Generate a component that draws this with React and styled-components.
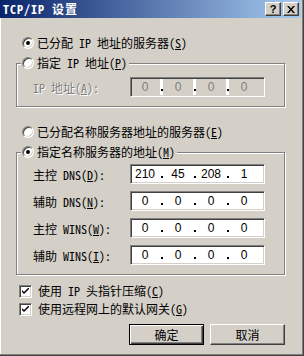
import React from "react";
import styled, { createGlobalStyle } from "styled-components";

const GlobalStyle = createGlobalStyle`
  html, body { margin: 0; padding: 0; background: #d4d0c8; }
  body {
    font-family: "Noto Sans Mono CJK SC", "Noto Sans CJK SC", sans-serif;
    font-size: 12px;
    color: #000;
  }
`;

const Window = styled.div`
  width: 304px;
  height: 356px;
  box-sizing: border-box;
  background: #d4d0c8;
  border-right: 1px solid #404040;
  border-bottom: 1px solid #404040;
  box-shadow: inset -1px -1px #808080, inset 1px 0 #fff;
  padding: 0 2px 2px 0;
  display: flex;
  flex-direction: column;
`;

const TitleBar = styled.div`
  height: 18px;
  display: flex;
  align-items: center;
  padding: 0 2px 0 3px;
  background: linear-gradient(to right, #0a246a, #a6caf0);
`;

const Title = styled.div`
  flex: 1;
  color: #fff;
  font-weight: bold;
  line-height: 18px;
  letter-spacing: 1px;
`;

const CapButton = styled.div`
  width: 16px;
  height: 14px;
  box-sizing: border-box;
  margin-left: ${(p) => p.$gap || 0}px;
  background: #d4d0c8;
  border: 1px solid;
  border-color: #fff #404040 #404040 #fff;
  box-shadow: inset -1px -1px #808080;
  display: flex;
  align-items: center;
  justify-content: center;
  font-family: "Liberation Sans", sans-serif;
  font-weight: bold;
  font-size: 11px;
  line-height: 12px;
`;

const Content = styled.div`
  display: flex;
  flex-direction: column;
  padding: 0 16px 0 16px;
`;

const OptionRow = styled.label`
  display: flex;
  align-items: center;
  gap: 3px;
  height: 16px;
  line-height: 16px;
  margin-top: ${(p) => p.$mt || 0}px;
  margin-left: ${(p) => p.$ml || 0}px;
  white-space: nowrap;
`;

const Radio = styled.span`
  position: relative;
  width: 12px;
  height: 12px;
  box-sizing: border-box;
  border-radius: 50%;
  background: #fff;
  border: 1px solid;
  border-color: #808080 #fff #fff #808080;
  box-shadow: inset 1px 1px #404040, inset -1px -1px #d4d0c8;
  flex: none;
  &::after {
    content: "";
    display: ${(p) => (p.$checked ? "block" : "none")};
    position: absolute;
    left: 3px;
    top: 3px;
    width: 4px;
    height: 4px;
    border-radius: 50%;
    background: #000;
  }
`;

const Check = styled.span`
  width: 13px;
  height: 13px;
  box-sizing: border-box;
  background: #fff;
  border: 1px solid;
  border-color: #808080 #fff #fff #808080;
  box-shadow: inset 1px 1px #404040, inset -1px -1px #d4d0c8;
  display: flex;
  align-items: center;
  justify-content: center;
  flex: none;
  margin-right: 3px;
`;

const Group = styled.fieldset`
  margin: ${(p) => p.$mt || 0}px 0 0 0;
  padding: 0;
  min-width: 0;
  border: 1px solid #808080;
  box-shadow: inset 1px 1px #fff, 1px 1px #fff;
`;

const GroupLegend = styled.legend`
  margin-left: 4px;
  padding: 0 2px 0 1px;
  background: #d4d0c8;
`;

const GroupBody = styled.div`
  display: flex;
  flex-direction: column;
  gap: 7px;
  padding: ${(p) => p.$pt}px 0 ${(p) => p.$pb}px 16px;
`;

const FieldRow = styled.div`
  display: flex;
  align-items: center;
  height: 20px;
`;

const FieldLabel = styled.div`
  width: 97px;
  white-space: nowrap;
  color: ${(p) => (p.$disabled ? "#808080" : "#000")};
  text-shadow: ${(p) => (p.$disabled ? "1px 1px #fff" : "none")};
`;

const IpBox = styled.div`
  width: 135px;
  height: 20px;
  box-sizing: border-box;
  display: flex;
  padding-left: 1px;
  background: ${(p) => (p.$disabled ? "#d4d0c8" : "#fff")};
  border: 1px solid;
  border-color: #808080 #fff #fff #808080;
  box-shadow: inset 1px 1px #404040, inset -1px -1px #d4d0c8;
  padding-top: 1px;
`;

const Seg = styled.div`
  width: 26px;
  text-align: center;
  font-family: "Liberation Sans", sans-serif;
  font-size: 12px;
  line-height: 16px;
  color: ${(p) => (p.$disabled ? "#808080" : "#000")};
`;

const Dot = styled.div`
  width: 7px;
  height: 16px;
  display: flex;
  justify-content: center;
  align-items: flex-end;
  background: ${(p) =>
    p.$disabled
      ? "linear-gradient(to right, transparent 2px, #fff 2px, #fff 5px, transparent 5px)"
      : "transparent"};
  &::after {
    content: "";
    width: 2px;
    height: 2px;
    margin-bottom: 4px;
    background: #000;
  }
`;

const ButtonBar = styled.div`
  display: flex;
  justify-content: flex-end;
  gap: 6px;
  margin-top: 7px;
`;

const Button = styled.div`
  width: 75px;
  height: 21px;
  box-sizing: border-box;
  display: flex;
  align-items: center;
  justify-content: center;
  background: #d4d0c8;
  border: 1px solid;
  border-color: ${(p) => (p.$default ? "#000" : "#fff #404040 #404040 #fff")};
  box-shadow: ${(p) =>
    p.$default
      ? "inset 1px 1px #fff, inset -1px -1px #404040, inset -2px -2px #808080"
      : "inset -1px -1px #808080"};
`;

const IpField = ({ values, disabled }) => (
  <IpBox $disabled={disabled}>
    {values.map((v, i) => (
      <React.Fragment key={i}>
        {i > 0 && <Dot $disabled={disabled} />}
        <Seg $disabled={disabled}>{v}</Seg>
      </React.Fragment>
    ))}
  </IpBox>
);

const CheckMark = () => (
  <svg width="7" height="7" viewBox="0 0 7 7">
    <path d="M0 2 L0 4 L2 6 L7 1 L7 -1 L2 4 Z" fill="#000" />
  </svg>
);

const dnsRows = [
  { label: "主控 DNS", key: "D", values: ["210", "45", "208", "1"] },
  { label: "辅助 DNS", key: "N", values: ["0", "0", "0", "0"] },
  { label: "主控 WINS", key: "W", values: ["0", "0", "0", "0"] },
  { label: "辅助 WINS", key: "I", values: ["0", "0", "0", "0"] },
];

export default function App() {
  return (
    <>
      <GlobalStyle />
      <Window>
        <TitleBar>
          <Title>TCP/IP 设置</Title>
          <CapButton>?</CapButton>
          <CapButton $gap={2}>
            <svg width="8" height="7" viewBox="0 0 8 7">
              <path d="M0 0h2l2 2.5L6 0h2L5 3.5 8 7H6L4 4.5 2 7H0l3-3.5z" fill="#000" />
            </svg>
          </CapButton>
        </TitleBar>
        <Content>
          <OptionRow $mt={17} $ml={6}>
            <Radio $checked />
            <span>
              已分配 IP 地址的服务器(<u>S</u>)
            </span>
          </OptionRow>

          <Group $mt={4}>
            <GroupLegend>
              <OptionRow>
                <Radio />
                <span>
                  指定 IP 地址(<u>P</u>)
                </span>
              </OptionRow>
            </GroupLegend>
            <GroupBody $pt={6} $pb={9}>
              <FieldRow>
                <FieldLabel $disabled>
                  IP 地址(<u>A</u>):
                </FieldLabel>
                <IpField values={["0", "0", "0", "0"]} disabled />
              </FieldRow>
            </GroupBody>
          </Group>

          <OptionRow $mt={17} $ml={6}>
            <Radio />
            <span>
              已分配名称服务器地址的服务器(<u>E</u>)
            </span>
          </OptionRow>

          <Group $mt={4}>
            <GroupLegend>
              <OptionRow>
                <Radio $checked />
                <span>
                  指定名称服务器的地址(<u>M</u>)
                </span>
              </OptionRow>
            </GroupLegend>
            <GroupBody $pt={4} $pb={9}>
              {dnsRows.map((r) => (
                <FieldRow key={r.key}>
                  <FieldLabel>
                    {r.label}(<u>{r.key}</u>):
                  </FieldLabel>
                  <IpField values={r.values} />
                </FieldRow>
              ))}
            </GroupBody>
          </Group>

          <OptionRow $mt={8} $ml={3}>
            <Check>
              <CheckMark />
            </Check>
            <span>
              使用 IP 头指针压缩(<u>C</u>)
            </span>
          </OptionRow>
          <OptionRow $mt={2} $ml={3}>
            <Check>
              <CheckMark />
            </Check>
            <span>
              使用远程网上的默认网关(<u>G</u>)
            </span>
          </OptionRow>

          <ButtonBar>
            <Button $default>确定</Button>
            <Button>取消</Button>
          </ButtonBar>
        </Content>
      </Window>
    </>
  );
}
